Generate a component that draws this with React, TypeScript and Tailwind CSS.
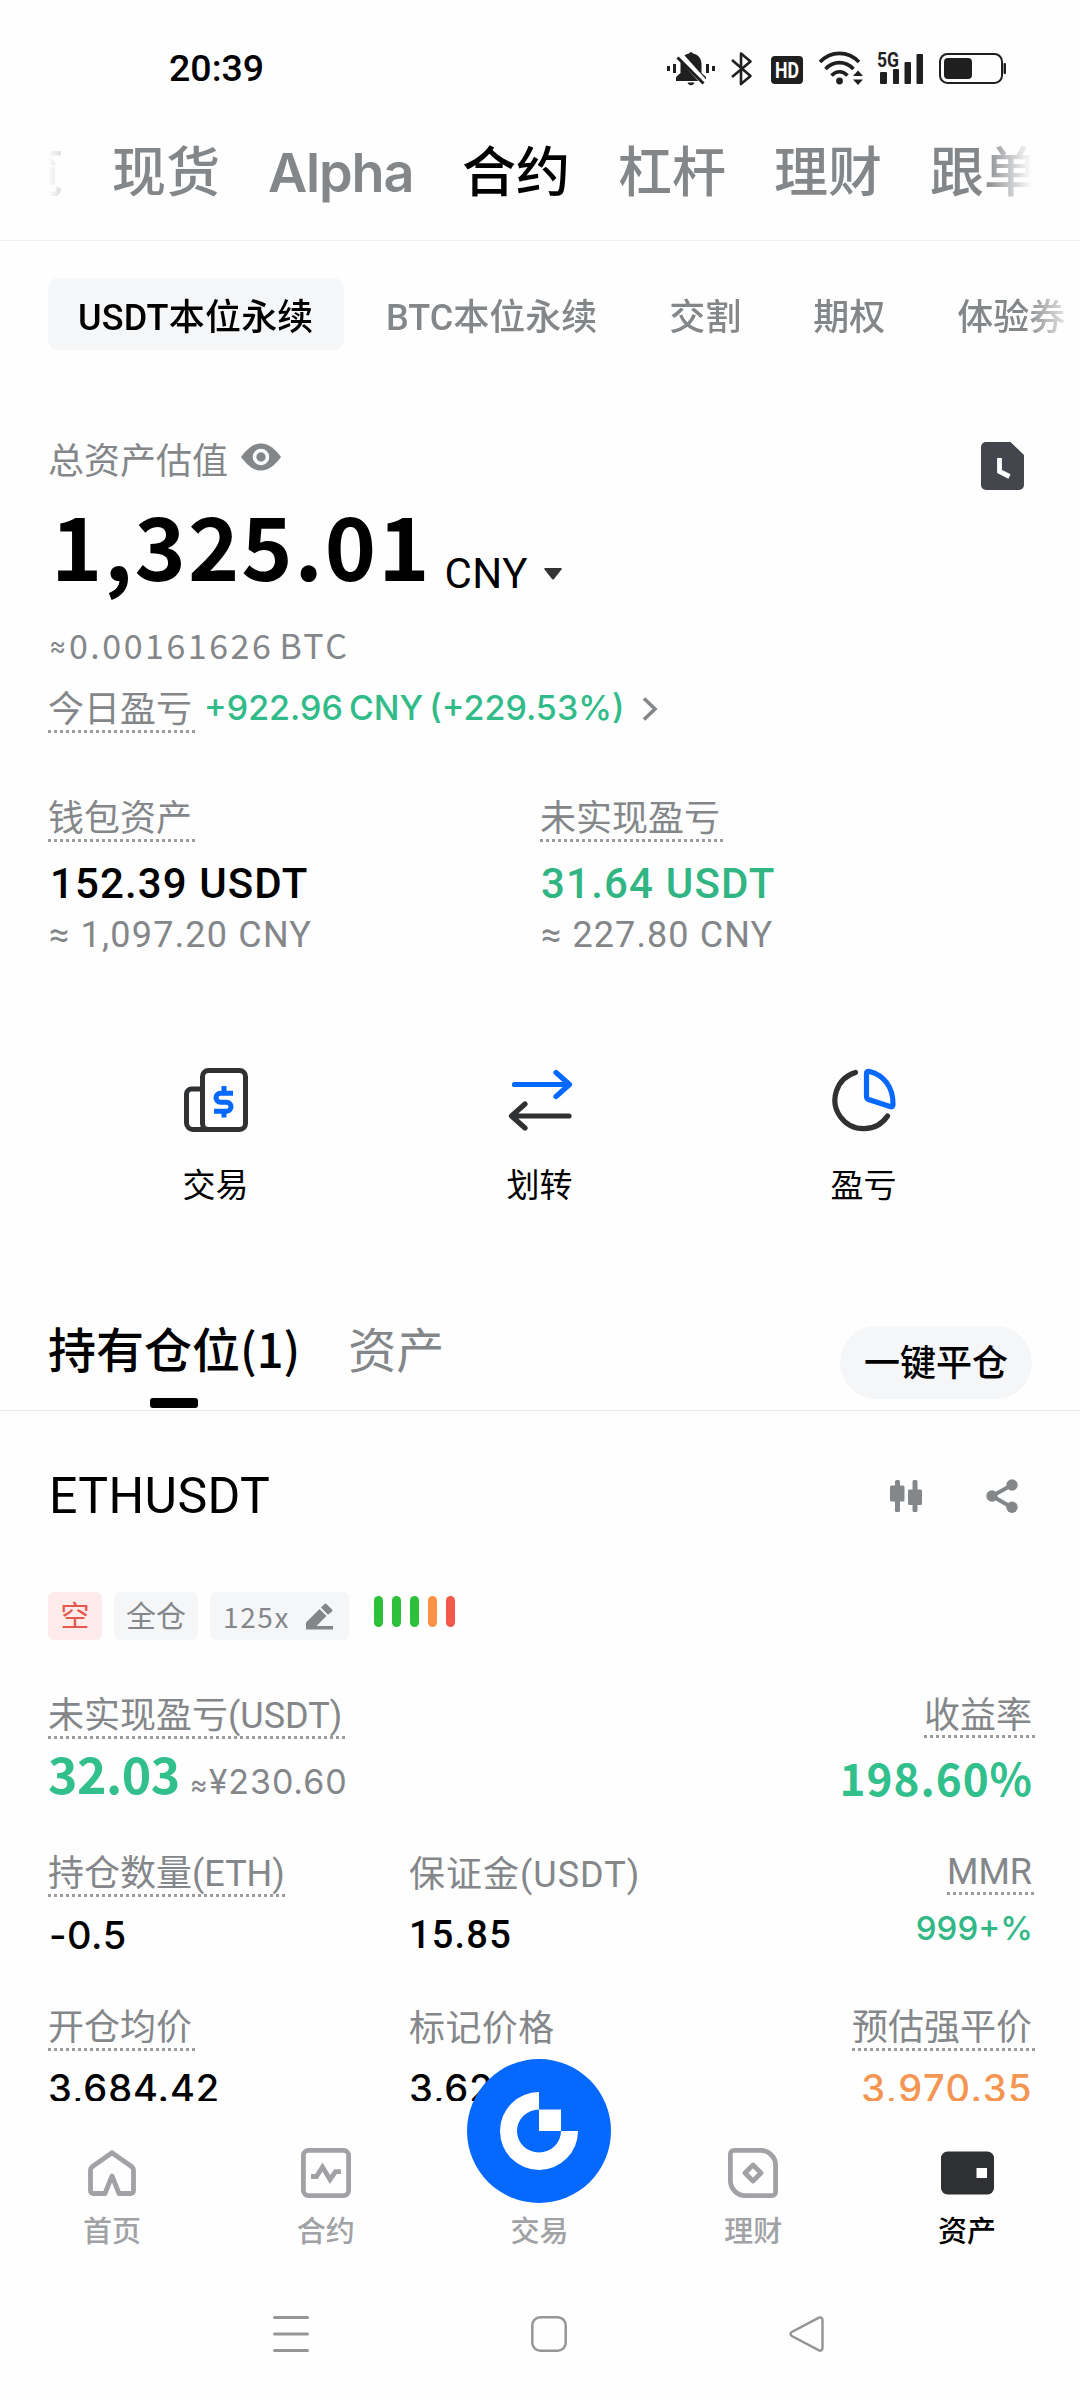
import type { ReactNode } from "react";

const NOTO = "[font-family:'Noto_Sans_CJK_SC',sans-serif]";
const INTER = "[font-family:Inter,'Noto_Sans_CJK_SC',sans-serif]";

const StatusIcons = () => (
  <svg width="340" height="52" viewBox="667 43 340 52" fill="#1f1f1f">
    {/* muted bell */}
    <rect x="667" y="66" width="3" height="5" />
    <rect x="673" y="64" width="3" height="9" />
    <rect x="706" y="64" width="3" height="9" />
    <rect x="712" y="66" width="3" height="5" />
    <path d="M689 53.500q2-3 4 0c5 1 8.500 5 8.500 10.500v9l4.500 4v4h-30v-4l4.500-4v-9c0-5.500 3.500-9.500 8.500-10.500z" />
    <path d="M687.500 82.500h7c-1 3.500-6 3.500-7 0z" />
    <path d="M679.500 55l26 29" stroke="#fff" strokeWidth="7" />
    <path d="M677.500 57.500l26 26" stroke="#1f1f1f" strokeWidth="3" />
    {/* bluetooth */}
    <path
      d="M732 60l18.500 16-9.500 8V53.500l9.500 8L732 77"
      fill="none"
      stroke="#1f1f1f"
      strokeWidth="2.600"
      strokeLinejoin="round"
    />
    {/* hd */}
    <rect x="771" y="56" width="32" height="28" rx="4" />
    <text
      x="787"
      y="78"
      fill="#fff"
      textAnchor="middle"
      textLength="24"
      lengthAdjust="spacingAndGlyphs"
      className="text-[22px] font-bold [font-family:Roboto,sans-serif]"
    >
      HD
    </text>
    {/* wifi */}
    <g fill="none" stroke="#1f1f1f" strokeWidth="3.600">
      <path d="M820 62c11-11.500 28-11.500 39 0" />
      <path d="M825.500 69c8-8.500 20-8.500 28 0" />
      <path d="M831.500 75.500c5-5 11-5 16 0" />
    </g>
    <circle cx="839.500" cy="81" r="3.400" />
    <path d="M853 76l5-5.500 5 5.500zM853 79.500h10l-5 5.500z" />
    {/* 5G signal */}
    <text
      x="877"
      y="66.500"
      textLength="22"
      lengthAdjust="spacingAndGlyphs"
      className="text-[20px] font-bold [font-family:Roboto,sans-serif]"
    >
      5G
    </text>
    <rect x="880" y="72" width="7" height="12" rx="1" />
    <rect x="893" y="69" width="6" height="15" rx="1" />
    <rect x="904.500" y="62" width="6.500" height="22" rx="1" />
    <rect x="916.500" y="54" width="6.500" height="30" rx="1" />
    {/* battery */}
    <rect x="940" y="54" width="62" height="29" rx="7.500" fill="none" stroke="#1f1f1f" strokeWidth="2" />
    <rect x="944" y="58" width="28" height="21" rx="4" />
    <rect x="1003.500" y="63" width="2.500" height="11" rx="1" />
  </svg>
);

const EyeIcon = () => (
  <svg width="40" height="28" viewBox="0 0 40 28">
    <path d="M0 14C6 6 12 .5 20 .5S34 6 40 14c-6 8-12 13.500-20 13.500S6 22 0 14z" fill="#84878a" />
    <circle cx="20" cy="14" r="6.500" fill="#84878a" stroke="#fff" strokeWidth="3.600" />
  </svg>
);

const RecordsIcon = () => (
  <svg width="43" height="48" viewBox="0 0 43 48">
    <path d="M5 0h24.500L43 13v30a5 5 0 0 1-5 5H5a5 5 0 0 1-5-5V5a5 5 0 0 1 5-5z" fill="#44464d" />
    <path d="M18.500 16v13.500l10 5" fill="none" stroke="#fff" strokeWidth="4.800" />
  </svg>
);

const TradeIcon = () => (
  <svg width="64" height="64" viewBox="0 0 64 64" fill="none" stroke="#303133" strokeWidth="5">
    <rect x="18.500" y="2.500" width="43" height="59" rx="6" />
    <path d="M18.500 21H7.500a5 5 0 0 0-5 5v29a6.500 6.500 0 0 0 6.500 6.500h16" />
    <g stroke="#0568ff">
      <path d="M49 25.200H36.500a4.500 4.500 0 0 0-4.500 4.500v0a4.500 4.500 0 0 0 4.500 4.500h6a4.500 4.500 0 0 1 4.500 4.500v0a4.500 4.500 0 0 1-4.500 4.500H30" />
      <path d="M40 18v7M40 43v6.500" />
    </g>
  </svg>
);

const TransferIcon = () => (
  <svg width="64" height="64" viewBox="0 0 64 64" fill="none" strokeWidth="5.200" strokeLinecap="round" strokeLinejoin="round">
    <path d="M6.500 16.500H61M48 4.500l13.500 12L48 28.500" stroke="#0568ff" />
    <path d="M61 48H4M17 36L3.500 48 17 60" stroke="#303133" />
  </svg>
);

const PieIcon = () => (
  <svg width="64" height="64" viewBox="0 0 64 64" fill="none" strokeWidth="5.200" strokeLinecap="round" strokeLinejoin="round">
    <path d="M23.500 4.500A28.700 28.700 0 1 0 55.500 48" stroke="#303133" />
    <path d="M34.500 5.500q0-2.500 3-2C51.500 7 61.500 19 61 37q-.5 2.500-3 1.500L36.500 31.500q-2-.8-2-3z" stroke="#0568ff" />
  </svg>
);

const CandleIcon = () => (
  <svg width="32" height="33" viewBox="0 0 32 33" fill="#84878a">
    <rect x="5" width="5" height="32" rx="1.500" />
    <rect y="5.500" width="14.500" height="16" rx="1.500" />
    <rect x="22.500" width="5" height="32" rx="1.500" />
    <rect x="18" y="9.500" width="14" height="15.500" rx="1.500" />
  </svg>
);

const ShareIcon = () => (
  <svg width="32" height="34" viewBox="0 0 32 34" fill="#84878a">
    <path d="M26 6L6 17l20 11.500" fill="none" stroke="#84878a" strokeWidth="4" />
    <circle cx="6" cy="17" r="5.700" />
    <circle cx="26" cy="6" r="5.700" />
    <circle cx="26" cy="28.200" r="5.700" />
  </svg>
);

const PenIcon = () => (
  <svg width="27" height="27" viewBox="0 0 27 27" fill="#84878a">
    <path d="M0 26.500v-7L13.500 6l7 7-10 10H27v3.500z" />
    <path d="M15 4.500L18.500 1q1-1 2 0L26 6.500q1 1 0 2L22 11.800z" />
  </svg>
);

const HomeIcon = () => (
  <svg width="50" height="50" viewBox="0 0 50 50" fill="none" stroke="#a0a2a5" strokeWidth="4.800" strokeLinejoin="round">
    <path d="M25 4.800L5.500 18.500Q3.500 20 3.500 22v20.500q0 3 3 3H18L25 28l7 17.500h11.500q3 0 3-3V22q0-2-2-3.500z" />
  </svg>
);

const FuturesIcon = () => (
  <svg width="50" height="50" viewBox="0 0 50 50" fill="none" stroke="#a0a2a5" strokeWidth="4.800">
    <rect x="2.400" y="2.400" width="45.200" height="45.200" rx="5" />
    <path d="M10 28.500h5.500L21.500 19l7.500 12.500 5.500-7.800H40" />
  </svg>
);

const EarnIcon = () => (
  <svg width="50" height="50" viewBox="0 0 50 50" fill="none" stroke="#a0a2a5" strokeWidth="4.800">
    <path d="M6 2.400h26.500A15 15 0 0 1 47.600 17.500V44a3.600 3.600 0 0 1-3.600 3.600H17.500A15 15 0 0 1 2.400 32.500V6A3.600 3.600 0 0 1 6 2.400z" />
    <path d="M25 17l8 8-8 8-8-8z" strokeLinejoin="round" />
  </svg>
);

const WalletIcon = () => (
  <svg width="53" height="50" viewBox="0 0 53 50">
    <rect y="3.500" width="53" height="43" rx="6.500" fill="#2f3034" />
    <rect x="35.500" y="20" width="10.500" height="10" fill="#fff" />
  </svg>
);

const BrandButton = () => (
  <svg width="144" height="144" viewBox="0 0 144 144">
    <circle cx="72" cy="72" r="72" fill="#0568ff" />
    <path d="M72 33a39 39 0 1 0 39 39H94a22 21.500 0 1 1-22-21.500z" fill="#fff" />
    <path d="M72 50.500h22V72H72z" fill="#fff" />
  </svg>
);

const mainTabs = ["概览", "现货", "Alpha", "合约", "杠杆", "理财", "跟单"];
const subTabs = ["USDT本位永续", "BTC本位永续", "交割", "期权", "体验券"];

const actions = [
  { label: "交易", icon: <TradeIcon /> },
  { label: "划转", icon: <TransferIcon /> },
  { label: "盈亏", icon: <PieIcon /> },
];

const riskBars = ["bg-[#2dc03a]", "bg-[#2dc03a]", "bg-[#2dc03a]", "bg-[#fb9346]", "bg-[#f3594b]"];

const navItems = [
  { label: "首页", icon: <HomeIcon /> },
  { label: "合约", icon: <FuturesIcon /> },
  { label: "交易", icon: null },
  { label: "理财", icon: <EarnIcon /> },
  { label: "资产", icon: <WalletIcon />, active: true },
];

// label with the dotted "tap for help" underline
const HintLabel = ({ children, className = "" }: { children: ReactNode; className?: string }) => (
  <div
    className={`w-fit h-[44px] pr-[3px] text-[36px] leading-[43px] whitespace-nowrap text-[#84878a] bg-[repeating-linear-gradient(90deg,#9a9c9e_0_3px,transparent_3px_6px)] bg-[length:100%_3px] bg-bottom bg-no-repeat ${className}`}
  >
    {children}
  </div>
);

const Header = () => (
  <header className="border-b border-[#efefef]">
    <div className="flex h-[137px] items-center justify-between pl-[169px] pr-[73px]">
      <span className="text-[37.500px] font-medium leading-none">20:39</span>
      <StatusIcons />
    </div>
    <nav className="mx-12 mb-[29px] flex h-[74px] items-center justify-start gap-12 overflow-hidden whitespace-nowrap text-[54px] font-medium leading-[74px] text-[#84878a] [mask-image:linear-gradient(90deg,transparent,#000_48px,#000_calc(100%-48px),transparent)]">
      {mainTabs.map((tab, i) => (
        <span
          key={tab}
          className={`shrink-0 ${i === 0 ? "-ml-[92px]" : ""} ${tab === "合约" ? "text-black" : ""} ${
            tab === "Alpha" ? `-mt-[3px] w-[146px] font-semibold tracking-[-1.200px] ${INTER}` : ""
          }`}
        >
          {tab}
        </span>
      ))}
    </nav>
  </header>
);

const SubTabs = () => (
  <nav className="mt-[37px] flex gap-3 overflow-hidden pl-12 whitespace-nowrap text-[36px] leading-[65px] text-[#84878a] [mask-image:linear-gradient(90deg,#000_1024px,transparent_1078px)]">
    {subTabs.map((tab, i) => (
      <span
        key={tab}
        className={`h-[72px] shrink-0 rounded-[10px] pt-[8px] font-medium ${
          i === 0 ? "w-[296px] bg-[#f4f6f8] pl-[30px] text-black tracking-[0.200px]" : "px-[30px]"
        }`}
      >
        {tab}
      </span>
    ))}
  </nav>
);

const Balance = () => (
  <section className="mt-[88px] flex items-start justify-between px-12">
    <div>
      <div className="flex h-12 items-start gap-[13px] text-[36px] leading-[48px] text-[#84878a]">
        <span>总资产估值</span>
        <span className="mt-[5px]">
          <EyeIcon />
        </span>
      </div>
      <div className="mt-[7px] flex h-[100px] items-start">
        <span className={`ml-[3px] text-[87px] font-bold leading-[100px] tracking-[2px] ${NOTO}`}>1,325.01</span>
        <span className="ml-[13px] mt-[57px] text-[42px] leading-[48px] tracking-[0.500px]">CNY</span>
        <svg width="18" height="12" viewBox="0 0 18 12" className="ml-[16px] mt-[75px]">
          <path d="M1.500 0h15q2 0 1 1.500L10 11q-1 1-2 0L.5 1.500Q-.5 0 1.500 0z" fill="#333" />
        </svg>
      </div>
      <p className={`mt-[28px] flex h-[47px] text-[34px] leading-[48px] tracking-[2.500px] [word-spacing:-4px] text-[#84878a] ${NOTO}`}>
        <span className={`w-[20px] ml-px text-[26px] leading-[50px] tracking-normal ${INTER}`}>≈</span>
        0.00161626 BTC
      </p>
      <div className="mt-[21px] flex h-[44px] items-start">
        <HintLabel>今日盈亏</HintLabel>
        <span
          className={`ml-[9px] text-[34px] font-medium leading-[37px] [word-spacing:-3px] text-[#31bb89] ${INTER}`}
        >
          +922.96 CNY (+229.53%)
        </span>
        <svg width="16" height="24" viewBox="0 0 16 24" className="ml-[17px] mt-[8px]">
          <path d="M2 1.500L13 12 2 22.500" fill="none" stroke="#84878a" strokeWidth="3.600" />
        </svg>
      </div>
    </div>
    <span className="mr-[8px] mt-[4px]">
      <RecordsIcon />
    </span>
  </section>
);

const Wallet = () => (
  <section className="mt-[65px] grid grid-cols-[492px_1fr] px-12">
    <div>
      <HintLabel>钱包资产</HintLabel>
      <p className="mt-[18px] ml-[2px] text-[42px] font-medium leading-[48px] tracking-[1.100px]">152.39 USDT</p>
      <p className="mt-[3px] ml-px text-[36px] leading-[48px] tracking-[1.200px] text-[#84878a]">≈ 1,097.20 CNY</p>
    </div>
    <div>
      <HintLabel>未实现盈亏</HintLabel>
      <p className="mt-[18px] ml-px text-[42px] font-medium leading-[48px] tracking-[1.200px] text-[#31b583]">31.64 USDT</p>
      <p className="mt-[3px] ml-px text-[36px] leading-[48px] tracking-[1.100px] text-[#84878a]">≈ 227.80 CNY</p>
    </div>
  </section>
);

const Actions = () => (
  <section className="mx-[54px] mt-[109px] grid grid-cols-3">
    {actions.map(({ label, icon }) => (
      <button key={label} className="flex flex-col items-center gap-[34px] pr-px text-[33px] leading-[40px]">
        {icon}
        {label}
      </button>
    ))}
  </section>
);

const PositionTabs = () => (
  <section className="mt-[116px] flex h-[89px] items-start border-b border-[#e9eaeb] px-12">
    <div className="flex flex-col items-center gap-4">
      <span className="h-[60px] text-[48px] font-medium leading-[60px]">
        持有仓位<span className={`text-[47px] leading-none ${NOTO}`}>(1)</span>
      </span>
      <span className="h-[10px] w-12 rounded-[3px] bg-black" />
    </div>
    <span className="ml-[48px] text-[48px] leading-[60px] text-[#84878a]">资产</span>
    <button className="ml-auto mt-1 h-[73px] w-[192px] rounded-full bg-[#f4f6f8] pt-[3px] text-[36px] font-medium leading-[66px]">
      一键平仓
    </button>
  </section>
);

const Position = () => (
  <section className="px-12">
    <div className="mt-[55px] flex items-center">
      <h2 className="mr-auto ml-px text-[50px] leading-[60px] tracking-[0.400px]">ETHUSDT</h2>
      <CandleIcon />
      <span className="ml-16 mr-[14px]">
        <ShareIcon />
      </span>
    </div>

    <div className="mt-[66px] flex h-12 items-start text-[30px] leading-[50px] text-[#84878a]">
      <span className="h-12 w-[54px] rounded-md bg-[#fdeceb] text-center text-[29px] text-[#e5584e]">空</span>
      <span className="ml-3 h-12 w-[84px] rounded-md bg-[#f4f6f8] text-center">全仓</span>
      <span className="ml-3 flex h-12 w-[139px] items-center justify-between rounded-md bg-[#f4f6f8] pl-[13px] pr-4">
        <span className={`text-[28px] leading-[48px] tracking-[1.600px] ${NOTO}`}>125x</span>
        <PenIcon />
      </span>
      <span className="ml-[25px] mt-1 flex gap-[9px]">
        {riskBars.map((color, i) => (
          <span key={i} className={`h-[31px] w-[9px] rounded-full ${color}`} />
        ))}
      </span>
    </div>

    <div className="mt-[55px] flex h-[107px] justify-between">
      <div>
        <HintLabel>未实现盈亏(USDT)</HintLabel>
        <div className="mt-[3px] flex h-[60px] items-baseline">
          <span className={`text-[50px] font-bold leading-[60px] tracking-[-0.500px] text-[#31bf8b] ${NOTO}`}>32.03</span>
          <span
            className={`ml-[10px] flex items-baseline text-[34px] leading-[48px] tracking-[0.900px] text-[#84878a] ${INTER}`}
          >
            <span className="w-[19px] text-[27px]">≈</span>¥230.60
          </span>
        </div>
      </div>
      <div className="flex flex-col items-end">
        <HintLabel className="-mr-[3px]">收益率</HintLabel>
        <span className={`mt-[9px] -mr-px text-[44px] font-bold leading-[60px] tracking-[1px] text-[#31bf8b] ${NOTO}`}>
          198.60%
        </span>
      </div>
    </div>

    <div className="mt-[51px] grid h-[106px] grid-cols-[361px_1fr_auto] text-[38px] leading-[48px]">
      <div>
        <HintLabel>持仓数量(ETH)</HintLabel>
        <p className={`mt-[14px] ml-px font-medium tracking-[0.500px] ${INTER}`}>-0.5</p>
      </div>
      <div>
        <p className="text-[36px] leading-[44px] tracking-[1px] text-[#84878a]">保证金(USDT)</p>
        <p className="mt-[14px] font-medium tracking-[1.200px]">15.85</p>
      </div>
      <div className="-mt-[2px] flex flex-col items-end">
        <HintLabel className="-mr-[3px]">MMR</HintLabel>
        <p className={`mt-[9px] -mr-px text-[33px] font-medium text-[#31b886] ${INTER}`}>999+%</p>
      </div>
    </div>

    <div className="mt-[48px] grid grid-cols-[361px_1fr_auto] text-[38px] leading-[48px]">
      <div>
        <HintLabel>开仓均价</HintLabel>
        <p className={`mt-[13px] font-medium tracking-[0.900px] ${INTER}`}>3,684.42</p>
      </div>
      <div>
        <p className="text-[36px] leading-[44px] tracking-[0.400px] text-[#84878a]">标记价格</p>
        <p className={`mt-[13px] font-medium tracking-[0.900px] ${INTER}`}>3,620.36</p>
      </div>
      <div className="flex flex-col items-end">
        <HintLabel className="-mr-[3px]">预估强平价</HintLabel>
        <p className={`mt-[13px] -mr-px font-medium tracking-[1.500px] text-[#f39654] ${INTER}`}>3,970.35</p>
      </div>
    </div>
  </section>
);

const BottomBar = () => (
  <footer className="relative h-[299px] shrink-0 bg-[#fefefe]">
    <button className="absolute -top-[42px] left-[467px]">
      <BrandButton />
    </button>
    <nav className="ml-[5px] mr-[6px] grid grid-cols-5 pt-[47px]">
      {navItems.map(({ label, icon, active }) => (
        <div key={label} className="flex flex-col items-center gap-[16px]">
          <span className="flex h-[50px] items-center">{icon}</span>
          <span className={`text-[29px] leading-[36px] font-medium ${active ? "text-black" : "text-[#a0a2a5]"}`}>
            {label}
          </span>
        </div>
      ))}
    </nav>
    <div className="mt-[66px] flex gap-[222px] pl-[273px]">
      <svg width="36" height="36" viewBox="0 0 36 36" stroke="#969696" strokeWidth="3" strokeLinecap="round">
        <path d="M1.500 1.500h33M1.500 18h33M1.500 34.500h33" />
      </svg>
      <svg width="36" height="36" viewBox="0 0 36 36" fill="none" stroke="#969696" strokeWidth="2.500">
        <rect x="1.300" y="1.300" width="33.400" height="33.400" rx="8" />
      </svg>
      <svg width="36" height="36" viewBox="0 0 36 36" fill="none" stroke="#969696" strokeWidth="2.500">
        <path d="M29.500 1.800L2.800 16q-2.500 2 0 4l26.700 14.200q4 1.200 4-2.700v-27q0-4-4-2.700z" />
      </svg>
    </div>
  </footer>
);

export default function App() {
  return (
    <div className="flex h-[2400px] w-[1080px] flex-col overflow-hidden bg-[#fefefe] text-black [font-family:Roboto,'Noto_Sans_CJK_SC',sans-serif]">
      <main className="min-h-0 flex-1 overflow-hidden">
        <Header />
        <SubTabs />
        <Balance />
        <Wallet />
        <Actions />
        <PositionTabs />
        <Position />
      </main>
      <BottomBar />
    </div>
  );
}
